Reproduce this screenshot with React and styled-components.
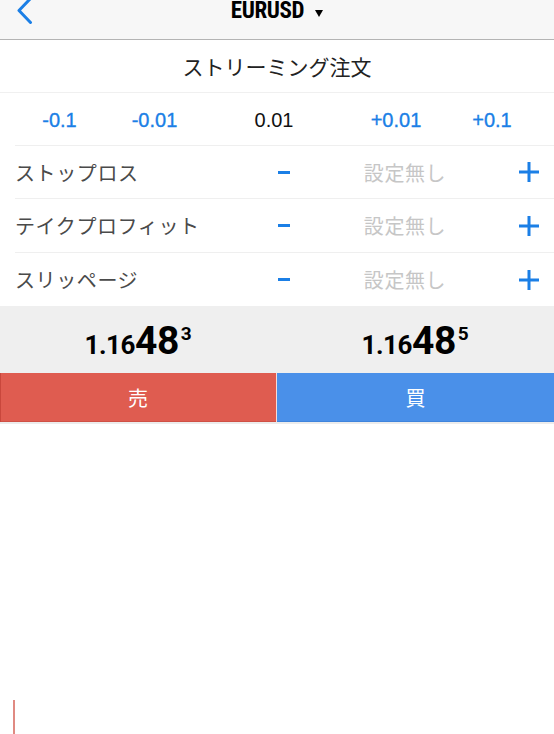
import React from "react";
import styled, { createGlobalStyle } from "styled-components";

const Global = createGlobalStyle`
  html, body { margin: 0; padding: 0; background: #fff; }
  body {
    width: 554px; height: 734px; overflow: hidden;
    font-family: "Liberation Sans", Arial, "Noto Sans CJK JP", sans-serif;
  }
  * { box-sizing: border-box; }
`;

const BLUE = "#1b7fe6";
const JP = `"Noto Sans CJK JP", "Noto Sans", sans-serif`;

const Page = styled.div`
  position: relative;
  width: 554px;
  height: 734px;
  background: #fff;
  display: flex;
  flex-direction: column;
`;

const Header = styled.header`
  height: 40px;
  flex: none;
  background: #f7f7f7;
  border-bottom: 1px solid #b4b4b4;
  display: grid;
  grid-template-columns: 60px 1fr 60px;
  align-items: start;
  overflow: hidden;
`;

const BackButton = styled.button`
  border: 0;
  background: none;
  padding: 0;
  margin: -3px 0 0 16px;
  width: 20px;
  height: 27px;
  display: block;
  cursor: pointer;
`;

const Title = styled.div`
  justify-self: center;
  display: flex;
  align-items: flex-start;
  gap: 11px;
  margin-top: -1px;
  font-family: Roboto, "Liberation Sans", sans-serif;
  font-stretch: 80%;
  font-weight: 700;
  font-size: 23px;
  line-height: 23px;
  letter-spacing: -0.4px;
  color: #000;
`;

const Caret = styled.svg`
  margin-top: 11px;
  flex: none;
`;

const Subtitle = styled.div`
  height: 53px;
  flex: none;
  display: flex;
  align-items: center;
  justify-content: center;
  border-bottom: 1px solid #f0f0f0;
  font-family: ${JP};
  font-size: 21px;
  color: #222;
`;

const LotRow = styled.div`
  height: 53px;
  flex: none;
  margin-left: 15px;
  border-bottom: 1px solid #efefef;
  display: grid;
  grid-template-columns: 89px 101px 138px 106px 86px;
  align-items: center;
  padding-top: 3px;
`;

const Lot = styled.span`
  justify-self: center;
  font-size: 20px;
  color: ${(p) => (p.$active ? "#111" : BLUE)};
  -webkit-text-stroke: ${(p) => (p.$active ? "0" : "0.35px")};
`;

const SettingRow = styled.div`
  height: ${(p) => p.$h}px;
  flex: none;
  margin-left: 15px;
  padding-right: 8px;
  border-bottom: ${(p) => (p.$last ? "0" : "1px solid #efefef")};
  display: grid;
  grid-template-columns: 1fr 28px 214px 34px;
  align-items: center;
`;

const Label = styled.span`
  font-family: ${JP};
  font-size: 20px;
  letter-spacing: 0.6px;
  color: #4a4a4a;
`;

const Placeholder = styled.span`
  justify-self: center;
  font-family: ${JP};
  font-size: 20px;
  letter-spacing: 0.6px;
  color: #c6c6c6;
`;

const IconCell = styled.span`
  justify-self: center;
  display: flex;
  align-items: center;
`;

const Prices = styled.div`
  height: 67px;
  flex: none;
  background: #efefef;
  display: grid;
  grid-template-columns: 276px 1fr;
`;

const PriceCell = styled.div`
  display: flex;
  align-items: center;
  justify-content: center;
  padding-top: 3px;
`;

const Price = styled.div`
  display: flex;
  align-items: baseline;
  font-family: Roboto, "Liberation Sans", sans-serif;
  font-stretch: 90%;
  font-weight: 700;
  color: #000;
  line-height: 1;
`;

const PriceSmall = styled.span`
  font-size: 26px;
  letter-spacing: -0.4px;
`;

const PriceBig = styled.span`
  font-size: 39px;
  letter-spacing: -0.6px;
`;

const PriceSup = styled.span`
  align-self: flex-start;
  font-size: 19px;
  margin-top: 2px;
  margin-left: 2px;
`;

const Actions = styled.div`
  height: 51px;
  flex: none;
  display: grid;
  grid-template-columns: 276px 1fr;
  gap: 1px;
  background: #f6dcd9;
  border-bottom: 2px solid #ececec;
`;

const TradeButton = styled.button`
  border: 0;
  margin: 0;
  padding: 0;
  background: ${(p) => (p.$side === "sell" ? "#df5c50" : "#4a90e9")};
  box-shadow: ${(p) =>
    p.$side === "sell" ? "inset 1px 0 0 #c9473c, inset 0 -1px 0 #cf5045" : "inset 0 -1px 0 #3f84dc"};
  color: #fff;
  font-family: ${JP};
  font-size: 20px;
  display: flex;
  align-items: center;
  justify-content: center;
  cursor: pointer;
`;

const Blank = styled.div`
  flex: 1;
  position: relative;
  background: #fff;
`;

const Cursor = styled.span`
  position: absolute;
  left: 13px;
  bottom: 0;
  width: 2px;
  height: 34px;
  background: #e08a82;
`;

const MinusIcon = () => (
  <svg width="12" height="3" viewBox="0 0 12 3">
    <rect width="12" height="3" fill={BLUE} />
  </svg>
);

const PlusIcon = () => (
  <svg width="20" height="20" viewBox="0 0 20 20">
    <rect x="8.5" y="0" width="3" height="20" fill={BLUE} />
    <rect x="0" y="8.5" width="20" height="3" fill={BLUE} />
  </svg>
);

const settings = [
  { label: "ストップロス", h: 53 },
  { label: "テイクプロフィット", h: 54 },
  { label: "スリッページ", h: 53, last: true },
];

const lots = [
  { v: "-0.1" },
  { v: "-0.01" },
  { v: "0.01", active: true },
  { v: "+0.01" },
  { v: "+0.1" },
];

const PriceView = ({ head, big, sup }) => (
  <Price>
    <PriceSmall>{head}</PriceSmall>
    <PriceBig>{big}</PriceBig>
    <PriceSup>{sup}</PriceSup>
  </Price>
);

export default function App() {
  return (
    <Page>
      <Global />
      <Header>
        <BackButton aria-label="back">
          <svg width="20" height="27" viewBox="0 0 20 27">
            <polyline
              points="14.5,1.5 3,13.5 14.5,25.5"
              fill="none"
              stroke={BLUE}
              strokeWidth="3"
              strokeLinecap="round"
              strokeLinejoin="round"
            />
          </svg>
        </BackButton>
        <Title>
          EURUSD
          <Caret width="8" height="7" viewBox="0 0 8 7">
            <polygon points="0,0 8,0 4,7" fill="#000" />
          </Caret>
        </Title>
        <span />
      </Header>

      <Subtitle>ストリーミング注文</Subtitle>

      <LotRow>
        {lots.map((l) => (
          <Lot key={l.v} $active={l.active}>
            {l.v}
          </Lot>
        ))}
      </LotRow>

      {settings.map((s) => (
        <SettingRow key={s.label} $h={s.h} $last={s.last}>
          <Label>{s.label}</Label>
          <IconCell>
            <MinusIcon />
          </IconCell>
          <Placeholder>設定無し</Placeholder>
          <IconCell>
            <PlusIcon />
          </IconCell>
        </SettingRow>
      ))}

      <Prices>
        <PriceCell>
          <PriceView head="1.16" big="48" sup="3" />
        </PriceCell>
        <PriceCell>
          <PriceView head="1.16" big="48" sup="5" />
        </PriceCell>
      </Prices>

      <Actions>
        <TradeButton $side="sell">売</TradeButton>
        <TradeButton $side="buy">買</TradeButton>
      </Actions>

      <Blank>
        <Cursor />
      </Blank>
    </Page>
  );
}
